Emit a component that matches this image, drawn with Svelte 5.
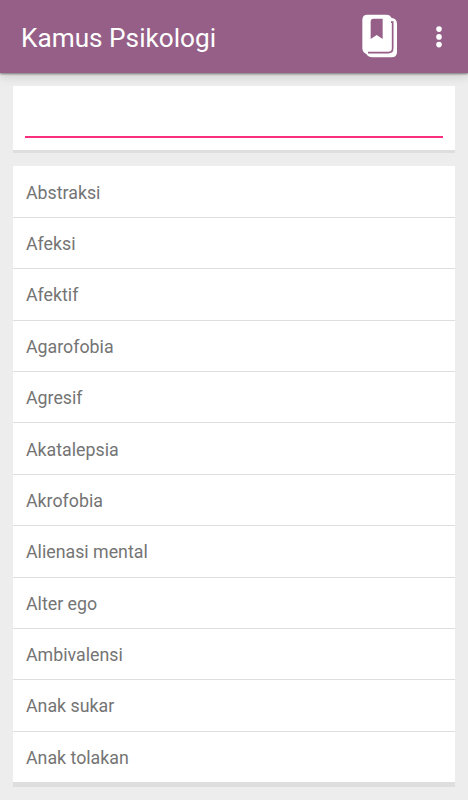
<script lang="ts">
	let query = $state('');

	const terms = [
		'Abstraksi',
		'Afeksi',
		'Afektif',
		'Agarofobia',
		'Agresif',
		'Akatalepsia',
		'Akrofobia',
		'Alienasi mental',
		'Alter ego',
		'Ambivalensi',
		'Anak sukar',
		'Anak tolakan'
	];

	const filtered = $derived(terms.filter((t) => t.toLowerCase().includes(query.toLowerCase())));
</script>

<div class="app">
	<header>
		<h1>Kamus Psikologi</h1>
		<button class="book" aria-label="Bookmark">
			<svg viewBox="36 43 108 132" width="36" height="44">
				<path
					fill="#fff"
					d="M52 45H110Q120 45 125 55Q141 57 141 72V157Q141 173 125 173H67Q55 173 49 163Q37 158 37 146V61Q37 45 52 45Z"
				/>
				<path fill="none" stroke="#955f88" stroke-width="5" d="M123 67.5H128V146Q128 159 115 159H54" />
				<path fill="#955f88" d="M70 57H98V118L80 106L62 118V66Q62 57 70 57Z" />
			</svg>
		</button>
		<button class="more" aria-label="Menu">
			<svg viewBox="0 0 6 22" width="6" height="22" fill="#fff">
				<circle cx="3" cy="3.1" r="2.8" />
				<circle cx="3" cy="10.9" r="2.8" />
				<circle cx="3" cy="18.6" r="2.8" />
			</svg>
		</button>
	</header>

	<main>
		<div class="card search">
			<input type="text" aria-label="Cari" bind:value={query} />
		</div>

		<ul class="card list">
			{#each filtered as term}
				<li>{term}</li>
			{/each}
		</ul>
	</main>
</div>

<style>
	:global(body) {
		background: #ededed;
	}

	.app {
		min-height: 800px;
		box-sizing: border-box;
		font-family: Roboto, sans-serif;
	}

	header {
		display: flex;
		align-items: center;
		height: 73px;
		box-sizing: border-box;
		padding: 0 26px 0 21px;
		background: #955f88;
		box-shadow: 0 1px 2px rgba(0, 0, 0, 0.45), 0 3px 10px rgba(0, 0, 0, 0.15);
	}

	h1 {
		flex: 1;
		margin: 2px 0 0;
		font-size: 26.2px;
		font-weight: 400;
		color: #fff;
	}

	button {
		display: flex;
		padding: 0;
		border: 0;
		background: none;
	}

	.book {
		margin-right: 38px;
		margin-bottom: 1px;
	}

	main {
		display: flex;
		flex-direction: column;
		gap: 16.4px;
		padding: 13px 13px 0;
	}

	.card {
		background: #fff;
		box-shadow: 0 3px #dedede;
	}

	.search {
		height: 64px;
		box-sizing: border-box;
		padding: 12px 12px 0;
	}

	input {
		display: block;
		width: 100%;
		height: 40px;
		box-sizing: border-box;
		padding: 0 2px;
		border: 0;
		border-bottom: 2px solid #fb2e7d;
		outline: none;
		background: none;
		font: 18px Roboto, sans-serif;
		color: #6b6b6b;
	}

	.list {
		margin: 0;
		padding: 0;
		list-style: none;
		box-shadow: 0 5px #dedede;
	}

	li {
		display: flex;
		align-items: center;
		height: 51.4px;
		box-sizing: border-box;
		padding: 1px 13px 0;
		border-bottom: 1px solid #dedede;
		font-size: 17.8px;
		color: #747474;
	}

	li:last-child {
		height: 50.2px;
		border-bottom: 0;
	}
</style>
